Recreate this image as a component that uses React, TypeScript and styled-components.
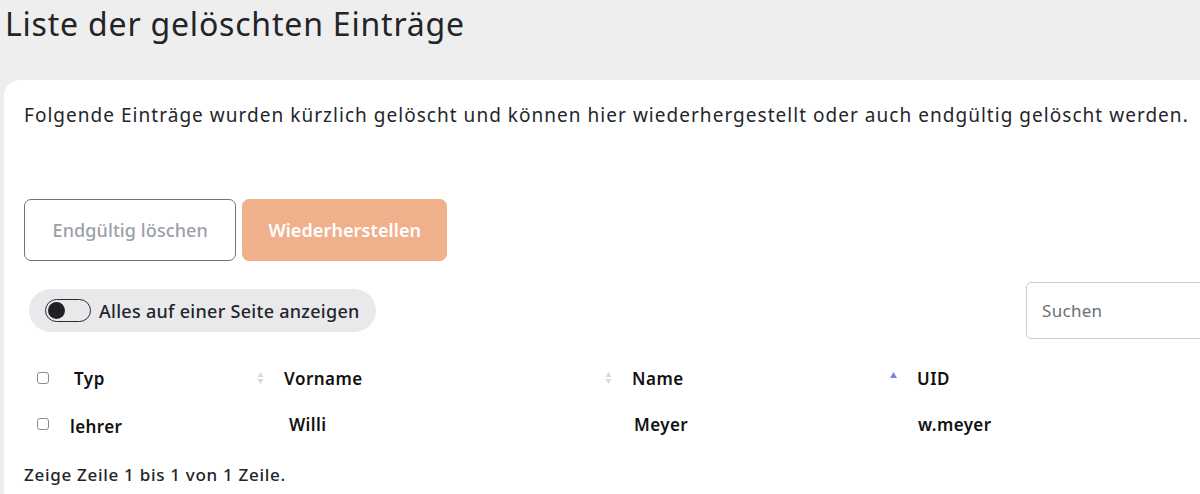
import React from "react";
import styled, { createGlobalStyle } from "styled-components";

const GlobalStyle = createGlobalStyle`
  html, body {
    margin: 0;
    padding: 0;
    overflow: hidden;
    background: #eeeeee;
  }
  body {
    font-family: "Noto Sans", "DejaVu Sans", sans-serif;
    color: #212529;
  }
  * { box-sizing: border-box; }
`;

const Page = styled.div`
  display: flex;
  flex-direction: column;
  padding: 0 0 0 4px;
  min-height: 494px;
`;

const Title = styled.h1`
  margin: 0;
  padding: 2px 0 0 1px;
  height: 80px;
  font-size: 32px;
  font-weight: 400;
  line-height: 44px;
  letter-spacing: 0.8px;
  color: #222428;
`;

const Card = styled.section`
  background: #ffffff;
  border-radius: 16px 0 0 0;
  margin-right: -40px;
  padding: 21px 20px 20px 20px;
  display: flex;
  flex-direction: column;
  flex: 1;
`;

const Intro = styled.p`
  margin: 0;
  font-size: 19px;
  line-height: 28px;
  letter-spacing: 1.03px;
  white-space: nowrap;
  color: #23262b;
`;

const ButtonRow = styled.div`
  display: flex;
  gap: 6px;
  margin-top: 70px;
`;

const Button = styled.button<{ $variant: "outline" | "primary" }>`
  height: 62px;
  padding: 0 ${(p) => (p.$variant === "primary" ? 25 : 27.5)}px;
  border-radius: 7px;
  font-family: inherit;
  font-size: 18px;
  letter-spacing: 0.1px;
  font-weight: ${(p) => (p.$variant === "primary" ? 600 : 500)};
  border: 1px solid ${(p) => (p.$variant === "primary" ? "#f1b08c" : "#6b7280")};
  background: ${(p) => (p.$variant === "primary" ? "#f1b08c" : "#ffffff")};
  color: ${(p) => (p.$variant === "primary" ? "#ffffff" : "#9ca0a8")};
  cursor: pointer;
`;

const Toolbar = styled.div`
  display: flex;
  align-items: center;
  justify-content: space-between;
  margin-top: 21px;
  height: 57px;
`;

const TogglePill = styled.label`
  display: flex;
  align-items: center;
  gap: 8px;
  height: 43px;
  margin-left: 5px;
  padding: 0 16px;
  background: #e9e9ec;
  border-radius: 22px;
  font-size: 18px;
  font-weight: 500;
  letter-spacing: 0.28px;
  color: #212529;
`;

const Switch = styled.span`
  display: inline-flex;
  align-items: center;
  width: 46px;
  height: 23px;
  border: 1.5px solid #2b2d31;
  border-radius: 12px;
  padding: 0 2px;
`;

const Knob = styled.span`
  width: 17px;
  height: 17px;
  border-radius: 50%;
  background: #1f2125;
`;

const Search = styled.input`
  width: 194px;
  height: 57px;
  border: 1px solid #c9ccd1;
  border-radius: 5px;
  padding: 0 15px;
  font-family: inherit;
  font-size: 17px;
  letter-spacing: 0.3px;
  color: #212529;
  outline: none;
  &::placeholder {
    color: #6b6f76;
  }
`;

const Grid = styled.div`
  display: grid;
  grid-template-columns: 38px 210px 348px 285px 1fr;
  margin-top: 16px;
`;

const HeadCell = styled.div<{ $pad?: number }>`
  display: flex;
  align-items: center;
  justify-content: space-between;
  height: 46px;
  padding: 0 8px 0 ${(p) => p.$pad ?? 12}px;
  font-size: 17px;
  font-weight: 600;
  letter-spacing: 0.5px;
  color: #111;
`;

const BodyCell = styled.div<{ $pad?: number; $shift?: number }>`
  display: flex;
  align-items: center;
  height: 46px;
  padding-left: ${(p) => p.$pad ?? 12}px;
  padding-top: ${(p) => p.$shift ?? 0}px;
  font-size: 17px;
  font-weight: 600;
  letter-spacing: 0.4px;
  color: #111;
`;

const Check = styled.input.attrs({ type: "checkbox" })`
  appearance: none;
  margin: 0;
  width: 12px;
  height: 12px;
  border: 1px solid #8c8c8c;
  border-radius: 3px;
  background: #fff;
`;

const Footer = styled.div`
  margin-top: 16px;
  font-size: 17px;
  font-weight: 500;
  line-height: 24px;
  letter-spacing: 0.7px;
  color: #212529;
`;

const SortBoth = () => (
  <svg width="7" height="14" viewBox="0 0 7 14" aria-hidden="true">
    <path d="M3.5 1 L6.5 6 L0.5 6 Z" fill="#d9d9d9" />
    <path d="M3.5 13 L6.5 8 L0.5 8 Z" fill="#d9d9d9" />
  </svg>
);

const SortAsc = () => (
  <svg width="7" height="14" viewBox="0 0 7 14" aria-hidden="true">
    <path d="M3.5 1 L7 7 L0 7 Z" fill="#7b86da" />
  </svg>
);

export default function App() {
  return (
    <>
      <GlobalStyle />
      <Page>
        <Title>Liste der gelöschten Einträge</Title>
        <Card>
          <Intro>
            Folgende Einträge wurden kürzlich gelöscht und können hier wiederhergestellt oder auch endgültig gelöscht werden.
          </Intro>
          <ButtonRow>
            <Button $variant="outline">Endgültig löschen</Button>
            <Button $variant="primary">Wiederherstellen</Button>
          </ButtonRow>
          <Toolbar>
            <TogglePill>
              <Switch>
                <Knob />
              </Switch>
              Alles auf einer Seite anzeigen
            </TogglePill>
            <Search placeholder="Suchen" />
          </Toolbar>
          <Grid>
            <HeadCell $pad={13}>
              <Check />
            </HeadCell>
            <HeadCell>
              <span>Typ</span>
              <SortBoth />
            </HeadCell>
            <HeadCell>
              <span>Vorname</span>
              <SortBoth />
            </HeadCell>
            <HeadCell>
              <span>Name</span>
              <SortAsc />
            </HeadCell>
            <HeadCell>
              <span>UID</span>
            </HeadCell>
            <BodyCell $pad={13}>
              <Check />
            </BodyCell>
            <BodyCell $pad={8} $shift={4}>lehrer</BodyCell>
            <BodyCell $pad={17}>Willi</BodyCell>
            <BodyCell $pad={14}>Meyer</BodyCell>
            <BodyCell $pad={13}>w.meyer</BodyCell>
          </Grid>
          <Footer>Zeige Zeile 1 bis 1 von 1 Zeile.</Footer>
        </Card>
      </Page>
    </>
  );
}
